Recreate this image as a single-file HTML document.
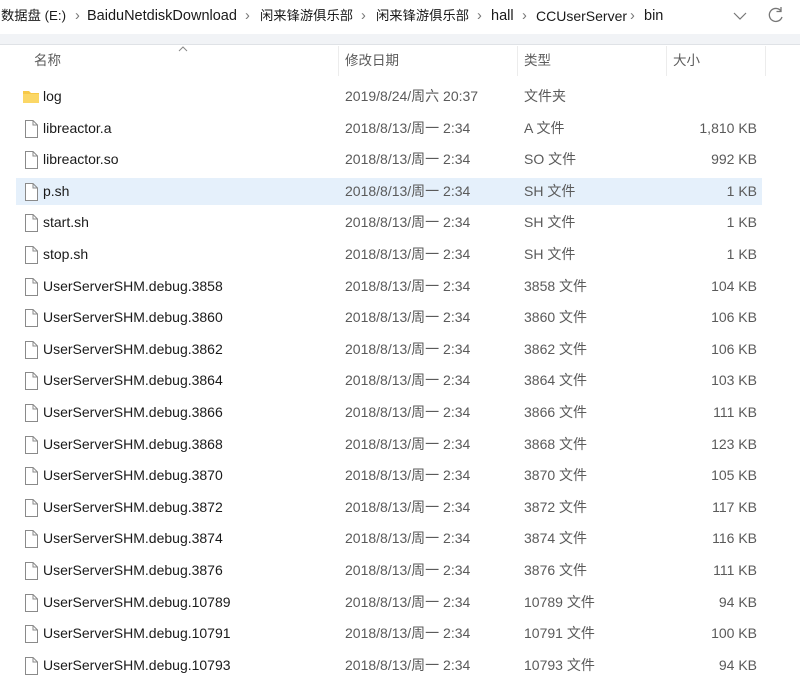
<!DOCTYPE html>
<html><head><meta charset="utf-8"><style>
*{margin:0;padding:0;box-sizing:border-box}
body{width:800px;height:673px;overflow:hidden;background:#fff;font-family:"Liberation Sans","Noto Sans CJK SC",sans-serif;color:#1a1a1a;position:relative}
.top{position:absolute;left:0;top:0;width:800px;height:34px;background:#fff;font-size:14.5px}
.top span{position:absolute;top:6px;line-height:20px;white-space:nowrap}
.top .c{font-size:13.3px}
.band{position:absolute;left:0;top:34px;width:800px;height:11px;background:#f1f3f6;border-bottom:1px solid #dfe2e6}
.hdr{position:absolute;top:51px;font-size:13.5px;color:#5c5c5c;line-height:20px}
.sep{position:absolute;top:46px;width:1px;height:30px;background:#ececec}
.row{position:absolute;left:16px;width:746px;height:27px;font-size:14px}
.row span{position:absolute;top:3px;white-space:nowrap;line-height:20px}
.row .d,.row .t,.row .s{color:#5a5a5a}
.sel{background:#e5f0fb}
.ic{position:absolute;left:6px;top:5px}
</style></head><body>
<div class="top">
<span class="c" style="left:1px">数据盘 (E:)</span><span style="left:75px;color:#777">›</span>
<span style="left:87px">BaiduNetdiskDownload</span><span style="left:245px;color:#777">›</span>
<span class="c" style="left:260px">闲来锋游俱乐部</span><span style="left:361px;color:#777">›</span>
<span class="c" style="left:376px">闲来锋游俱乐部</span><span style="left:477px;color:#777">›</span>
<span style="left:491px">hall</span><span style="left:522px;color:#777">›</span>
<span style="left:536px;font-size:14px">CCUserServer</span><span style="left:630px;color:#777">›</span>
<span style="left:644px">bin</span>
<svg style="position:absolute;left:733px;top:11px" width="14" height="10"><path d="M1 2 L7 8 L13 2" fill="none" stroke="#777" stroke-width="1.2"/></svg>
<svg style="position:absolute;left:767px;top:6px" width="18" height="18"><path d="M14 5 A6.5 6.5 0 1 0 15 11" fill="none" stroke="#777" stroke-width="1.3"/><path d="M14 1 V5.5 H9.5" fill="none" stroke="#777" stroke-width="1.3"/></svg>
</div>
<div class="band"></div>
<svg style="position:absolute;left:178px;top:46px" width="10" height="6"><path d="M1 5 L5 1 L9 5" fill="none" stroke="#888" stroke-width="1"/></svg>
<div class="hdr" style="left:34px">名称</div>
<div class="hdr" style="left:345px">修改日期</div>
<div class="hdr" style="left:524px">类型</div>
<div class="hdr" style="left:673px">大小</div>
<div class="sep" style="left:338px"></div><div class="sep" style="left:517px"></div><div class="sep" style="left:666px"></div><div class="sep" style="left:765px"></div>
<div id="rows"></div>
<script>
var data=[["log","2019/8/24/周六 20:37","文件夹",""],["libreactor.a","2018/8/13/周一 2:34","A 文件","1,810 KB"],["libreactor.so","2018/8/13/周一 2:34","SO 文件","992 KB"],["p.sh","2018/8/13/周一 2:34","SH 文件","1 KB"],["start.sh","2018/8/13/周一 2:34","SH 文件","1 KB"],["stop.sh","2018/8/13/周一 2:34","SH 文件","1 KB"]];
var n=[[3858,104],[3860,106],[3862,106],[3864,103],[3866,111],[3868,123],[3870,105],[3872,117],[3874,116],[3876,111],[10789,94],[10791,100],[10793,94]];
n.forEach(function(x){data.push(["UserServerSHM.debug."+x[0],"2018/8/13/周一 2:34",x[0]+" 文件",x[1]+" KB"])});
var h="";
data.forEach(function(r,i){var y=Math.round(83+i*31.6);
var icon=i==0?'<svg class="ic" width="18" height="16" style="top:6px"><path d="M1 2 H7 L9 4 H17 V14 H1 Z" fill="#f7c948"/><rect x="1" y="5" width="16" height="9" fill="#fbd766"/></svg>':'<svg class="ic" width="16" height="18" style="left:8px"><path d="M1.5 0.5 H9 L13.5 5 V17.5 H1.5 Z M9 0.5 V5 H13.5" fill="#fff" stroke="#8a8a8a" stroke-width="1"/></svg>';
h+='<div class="row'+(i==3?' sel':'')+'" style="top:'+y+'px">'+icon+'<span style="left:27px">'+r[0]+'</span><span class="d" style="left:329px">'+r[1]+'</span><span class="t" style="left:508px">'+r[2]+'</span><span class="s" style="right:5px">'+r[3]+'</span></div>';});
document.getElementById("rows").innerHTML=h;
</script>
</body></html>
